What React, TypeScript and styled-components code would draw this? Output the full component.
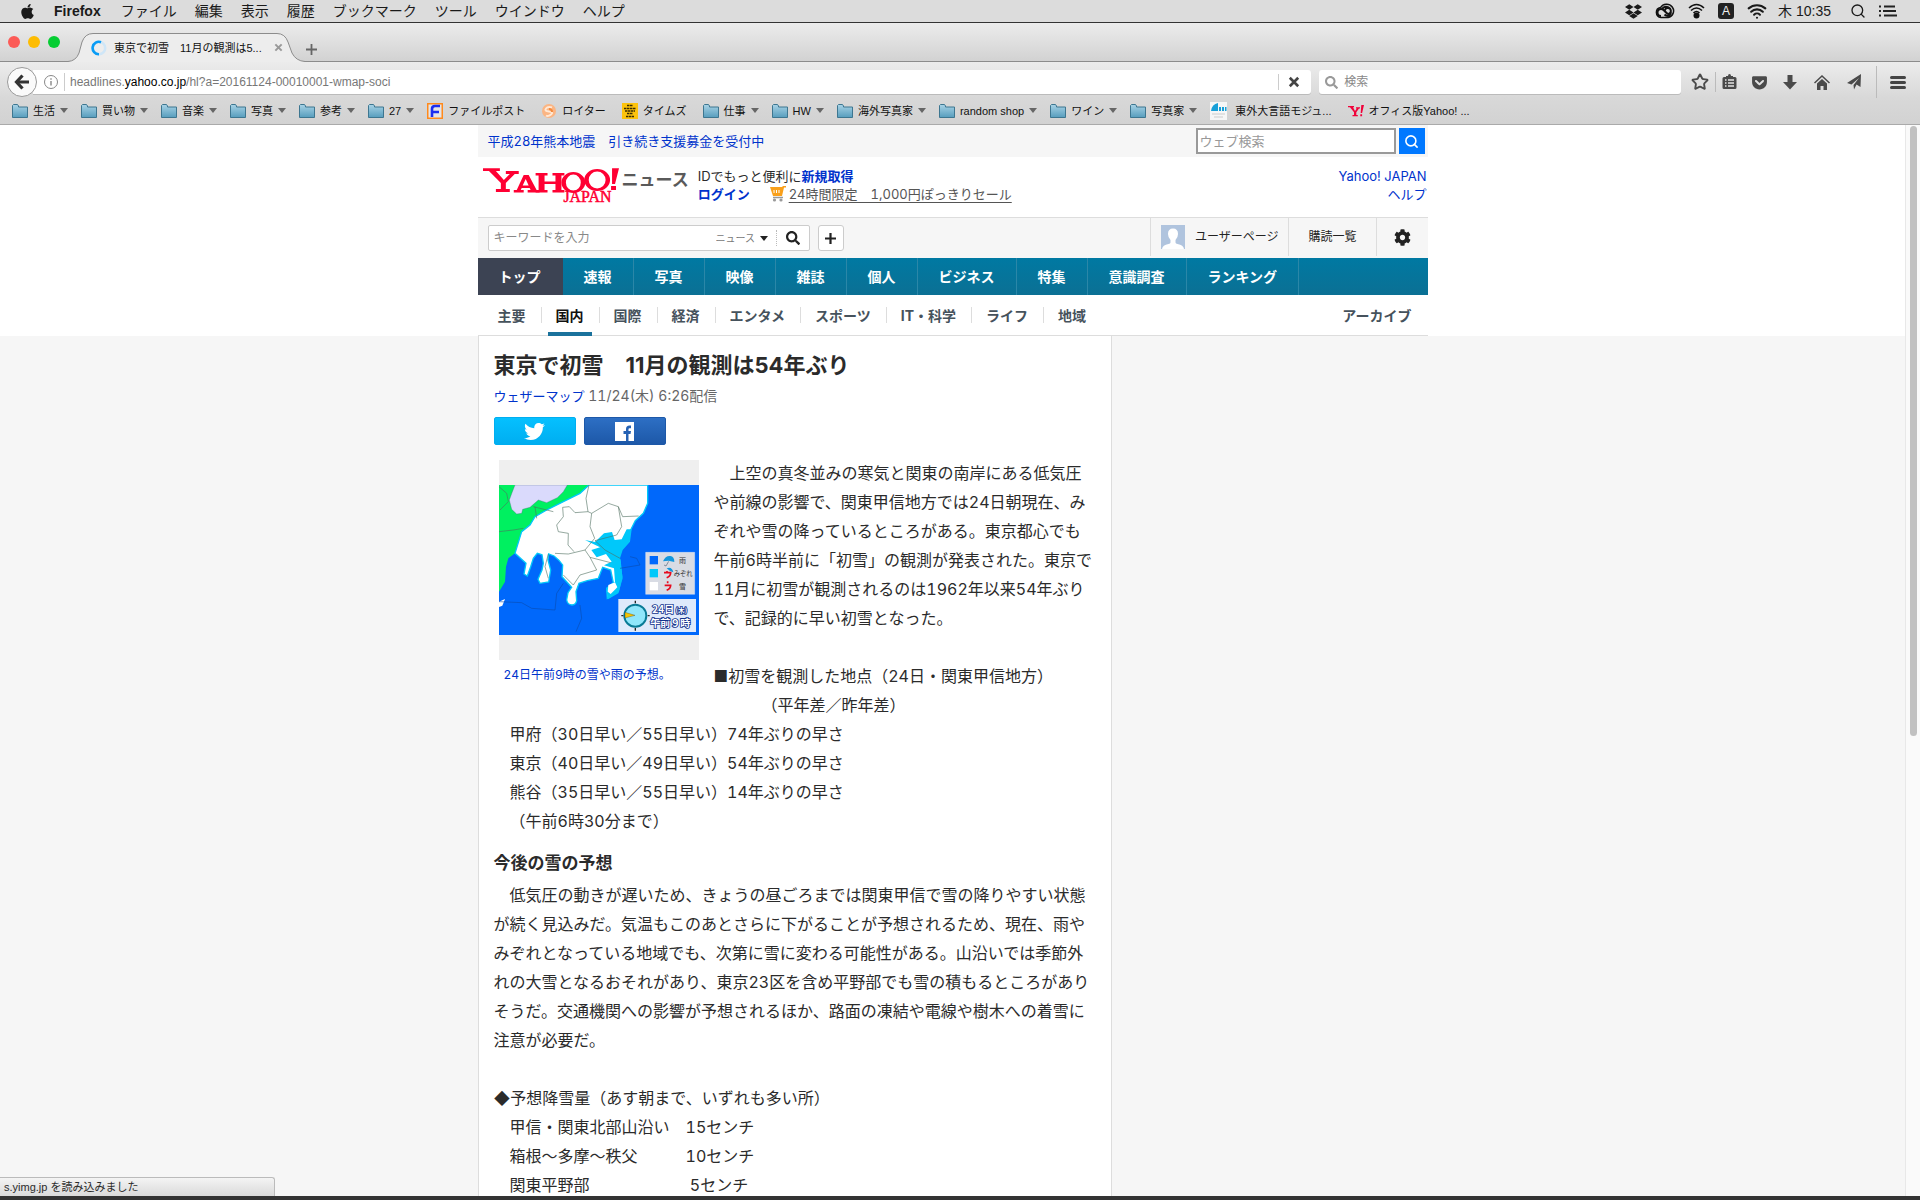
import React from "react";
import styled, { createGlobalStyle } from "styled-components";
import { FaApple, FaDropbox, FaSearch, FaTwitter, FaGetPocket, FaCog } from "react-icons/fa";
import { Wifi, Star, Search } from "lucide-react";

const ui = `"Liberation Sans", "Noto Sans CJK JP", sans-serif`;
const web = `Inter, "Noto Sans CJK JP", sans-serif`;

const Global = createGlobalStyle`
  *, *::before, *::after { box-sizing: border-box; }
  body { margin: 0; font-family: ${web}; color: #2b2b2b; background: #f6f6f6; }
  a { color: #0033cc; text-decoration: none; }
  button, input, select { font: inherit; margin: 0; }
  button { cursor: pointer; }
  ul { list-style: none; margin: 0; padding: 0; }
  h1, h2, p, figure { margin: 0; }
  svg { display: block; flex: none; }
`;

const Screen = styled.div`
  position: relative;
  height: 100vh;
  display: flex;
  flex-direction: column;
  overflow: hidden;
  border-bottom: 4px solid #333;
`;

/* ---------- system menu bar ---------- */
const MenuBar = styled.header`
  flex: none;
  height: 23px;
  display: flex;
  align-items: center;
  justify-content: space-between;
  padding: 0 23px 0 19px;
  background: #dcdcdc;
  border-bottom: 1px solid #333;
  font: 14px/22px ${ui};
  color: #1a1a1a;
`;
const MenuGroup = styled.nav`
  display: flex;
  align-items: center;
  gap: 18px;
`;
const MenuItem = styled.button<{ $strong?: boolean }>`
  border: 0;
  padding: 0;
  background: none;
  color: inherit;
  line-height: 22px;
  white-space: nowrap;
  font-weight: ${(p) => (p.$strong ? 700 : 400)};
  margin-right: ${(p) => (p.$strong ? 2 : 0)}px;
`;
const StatusGroup = styled.div`
  display: flex;
  align-items: center;
  gap: 13px;
`;
const InputMode = styled.span`
  width: 16px;
  height: 16px;
  border-radius: 3px;
  background: #222;
  color: #eee;
  font-size: 12px;
  line-height: 16px;
  text-align: center;
`;
const Clock = styled.time`
  margin-left: -2px;
  margin-right: 6px;
`;

/* ---------- browser chrome ---------- */
const TabStrip = styled.div`
  flex: none;
  height: 39px;
  display: flex;
  align-items: flex-end;
  padding-left: 8px;
  background: linear-gradient(#ececec, #d2d2d2);
  border-bottom: 1px solid #8c8c8c;
  font: 11px/16px ${ui};
`;
const Lights = styled.div`
  display: flex;
  gap: 8px;
  margin-bottom: 13px;
`;
const Light = styled.button<{ $color: string }>`
  width: 12px;
  height: 12px;
  padding: 0;
  border: 0;
  border-radius: 50%;
  background: ${(p) => p.$color};
`;
const Tab = styled.div`
  position: relative;
  width: 240px;
  height: 29px;
  margin-left: 6px;
  margin-bottom: -1px;
`;
const TabShape = styled.svg`
  position: absolute;
  inset: 0;
`;
const TabContent = styled.div`
  position: relative;
  display: flex;
  align-items: center;
  height: 29px;
  padding: 0 23px 0 25px;
  color: #111;
`;
const TabTitle = styled.span`
  flex: 1;
  margin-left: 7px;
  overflow: hidden;
  white-space: nowrap;
`;
const IconButton = styled.button<{ $w?: number }>`
  flex: none;
  display: flex;
  align-items: center;
  justify-content: center;
  width: ${(p) => p.$w ?? 16}px;
  height: 24px;
  padding: 0;
  border: 0;
  background: none;
  color: #4a4a4a;
`;
const NavBar = styled.div`
  flex: none;
  height: 36px;
  display: flex;
  align-items: center;
  padding: 4px 9px 0 7px;
  background: linear-gradient(#ececec, #d8d8d8);
  font: 12px/24px ${ui};
`;
const BackButton = styled.button`
  z-index: 1;
  display: flex;
  align-items: center;
  justify-content: center;
  width: 30px;
  height: 30px;
  padding: 0;
  border: 1px solid #9a9a9a;
  border-radius: 50%;
  background: #fafafa;
  color: #333;
`;
const UrlBox = styled.div`
  flex: 1;
  display: flex;
  align-items: center;
  height: 24px;
  margin-left: -4px;
  padding-left: 11px;
  border-radius: 0 3px 3px 0;
  background: #fff;
  box-shadow: 0 1px 0 #bbb;
`;
const UrlLabel = styled.label`
  flex: 1;
  display: flex;
  margin-left: 6px;
  padding-left: 5px;
  border-left: 1px solid #ccc;
  line-height: 18px;
  font-size: 12px;
  color: #777;
  white-space: nowrap;
  b { font-weight: 400; color: #000; }
`;
const BareInput = styled.input`
  flex: 1;
  min-width: 0;
  border: 0;
  padding: 0;
  outline: 0;
  background: none;
  color: #333;
  &::placeholder { color: #888; opacity: 1; }
`;
const StopWrap = styled.div`
  padding: 0 10px 0 8px;
  height: 16px;
  display: flex;
  align-items: center;
  border-left: 1px solid #ccc;
`;
const SearchBox = styled.label`
  width: 19%;
  height: 24px;
  display: flex;
  align-items: center;
  gap: 6px;
  margin-left: 8px;
  padding-left: 6px;
  border-radius: 3px;
  background: #fff;
  box-shadow: 0 1px 0 #bbb;
  color: #999;
`;
const Tools = styled.div`
  display: flex;
  align-items: center;
  padding-left: 10px;
`;
const ToolRule = styled.span<{ $wide?: boolean }>`
  width: 1px;
  height: ${(p) => (p.$wide ? 32 : 20)}px;
  margin: ${(p) => (p.$wide ? "0 8px 0 6px" : "0 -2px 0 6px")};
  background: #bbb;
`;
const Bookmarks = styled.nav`
  flex: none;
  height: 27px;
  display: flex;
  align-items: center;
  gap: 13px;
  padding: 0 12px 1px;
  background: linear-gradient(#d8d8d8, #d2d2d2);
  border-bottom: 1px solid #aaa;
  font: 11px/20px ${ui};
`;
const Bookmark = styled.button<{ $link?: boolean }>`
  display: flex;
  align-items: center;
  gap: 5px;
  padding: 0;
  margin-right: ${(p) => (p.$link ? 3 : 0)}px;
  border: 0;
  background: none;
  color: #111;
  white-space: nowrap;
`;
const Caret = styled.i<{ $color?: string }>`
  border: 4px solid transparent;
  border-bottom: 0;
  border-top: 5px solid ${(p) => p.$color ?? "#666"};
`;

/* ---------- page ---------- */
const Viewport = styled.div`
  flex: 1;
  min-height: 0;
  display: flex;
  background: #f6f6f6;
`;
const Page = styled.div`
  flex: 1;
  min-width: 0;
  overflow: hidden;
`;
const ScrollTrack = styled.div`
  flex: none;
  width: 15px;
  padding: 1px 3px 0 4px;
  background: #fafafa;
  border-left: 1px solid #e8e8e8;
`;
const ScrollThumb = styled.div`
  height: 57%;
  border-radius: 4px;
  background: #c1c1c1;
`;
const Masthead = styled.header`
  background: #fff;
`;
const Column = styled.div`
  width: 950px;
  max-width: 100%;
  margin: 0 auto;
`;
const TopStrip = styled.div`
  display: flex;
  align-items: center;
  justify-content: space-between;
  height: 32px;
  padding: 0 3px 0 10px;
  background: #f6f6f6;
  font-size: 13px;
  line-height: 18px;
  font-variant-numeric: tabular-nums;
`;
const WebSearch = styled.form`
  display: flex;
  gap: 3px;
  input {
    width: 200px;
    height: 26px;
    padding: 0 2px;
    border: 2px solid #999;
    border-radius: 0;
    background: #fff;
    outline: 0;
  }
  input::placeholder { color: #999; opacity: 1; }
  button {
    display: flex;
    align-items: center;
    justify-content: center;
    width: 26px;
    height: 26px;
    padding: 0;
    border: 0;
    background: #0078ff;
    color: #fff;
  }
`;
const Brand = styled.div`
  display: flex;
  height: 60px;
  padding: 10px 1px 0 5px;
  font-size: 13px;
  line-height: 18px;
  font-variant-numeric: tabular-nums;
`;
const NewsWord = styled.span`
  margin: 0 9px 0 3px;
  padding-top: 4px;
  font-size: 17px;
  line-height: 18px;
  font-weight: 700;
  color: #5a5a5a;
`;
const LoginLines = styled.div`
  a { font-weight: 700; }
`;
const PromoRow = styled.div`
  display: flex;
  align-items: center;
  gap: 20px;
  span { display: flex; gap: 3px; align-items: center; }
  span a { font-weight: 400; color: #555; text-decoration: underline; text-underline-offset: 3px; }
`;
const HelpLinks = styled.div`
  display: flex;
  flex-direction: column;
  align-items: flex-end;
  margin-left: auto;
`;
const ToolRow = styled.div`
  display: flex;
  align-items: center;
  height: 41px;
  padding-left: 10px;
  background: #f6f6f6;
  border-top: 1px solid #ddd;
  font-size: 12px;
  line-height: 18px;
`;
const Keyword = styled.form`
  display: flex;
  align-items: center;
  width: 322px;
  height: 26px;
  padding: 0 0 0 5px;
  border: 1px solid #ccc;
  border-radius: 2px;
  background: #fff;
`;
const Scope = styled.span`
  display: flex;
  align-items: center;
  gap: 4px;
  margin-right: 2px;
  select {
    appearance: none;
    padding: 0;
    border: 0;
    background: none;
    color: #777;
    font-size: 10px;
  }
`;
const ScopeRule = styled.i`
  height: 16px;
  margin-left: 6px;
  border-left: 1px dotted #bbb;
`;
const PlusButton = styled.button`
  display: flex;
  align-items: center;
  justify-content: center;
  width: 26px;
  height: 26px;
  margin-left: 8px;
  padding: 0;
  border: 1px solid #ccc;
  border-radius: 3px;
  background: #fff;
`;
const UserCells = styled.div`
  display: flex;
  margin-left: auto;
  height: 38px;
  align-self: flex-start;
`;
const UserCell = styled.a<{ $pad: number }>`
  display: flex;
  align-items: center;
  gap: 10px;
  padding: 0 ${(p) => p.$pad}px;
  border-left: 1px solid #ddd;
  color: #222;
`;
const MainNav = styled.ul`
  display: flex;
  height: 37px;
  background: linear-gradient(#0079a2, #0b7094);
`;
const MainItem = styled.li<{ $on?: boolean }>`
  border-right: 1px solid ${(p) => (p.$on ? "#3c4353" : "#2b87a8")};
  background: ${(p) => (p.$on ? "#3c4353" : "none")};
  a {
    display: block;
    padding: 0 21px;
    font-size: 14px;
    font-weight: 700;
    line-height: 38px;
    color: #fff;
  }
`;
const SubNav = styled.ul`
  display: flex;
  align-items: center;
  height: 41px;
  padding-left: 6px;
  border-bottom: 1px solid #ddd;
  font-size: 14px;
  font-weight: 700;
  line-height: 42px;
`;
const SubItem = styled.li<{ $on?: boolean }>`
  display: flex;
  align-items: center;
  height: 41px;
  padding: 0 6px;
  &::after {
    content: "";
    width: 1px;
    height: 16px;
    margin-left: 7px;
    margin-right: -6px;
    background: #ddd;
  }
  &:nth-last-child(-n + 2)::after { background: none; }
  &:last-child { margin-left: auto; }
  a {
    height: 41px;
    padding: 0 8px;
    border-bottom: 4px solid ${(p) => (p.$on ? "#1a729c" : "transparent")};
    color: ${(p) => (p.$on ? "#111" : "#46525c")};
  }
`;
const Article = styled.article`
  width: 634px;
  max-width: 100%;
  padding: 14px 16px 0 15px;
  border: 1px solid #ddd;
  border-width: 0 1px;
  background: #fff;
`;
const Title = styled.h1`
  font-size: 22px;
  line-height: 30px;
`;
const Meta = styled.p`
  margin-top: 6px;
  font-size: 14px;
  line-height: 20px;
  font-variant-numeric: tabular-nums;
  color: #666;
  a { font-size: 13px; }
`;
const Share = styled.div`
  display: flex;
  gap: 8px;
  margin: 11px 0 14px;
`;
const ShareButton = styled.button<{ $from: string; $to: string }>`
  display: flex;
  align-items: center;
  justify-content: center;
  width: 82px;
  height: 28px;
  padding: 0;
  border: 1px solid ${(p) => p.$to};
  border-radius: 2px;
  background: linear-gradient(${(p) => p.$from}, ${(p) => p.$to});
  color: #fff;
`;
const Body = styled.div`
  font-size: 16px;
  line-height: 29px;
  font-variant-numeric: tabular-nums;
  text-spacing-trim: space-all;
  p { white-space: pre-wrap; line-break: strict; }
`;
const Photo = styled.figure`
  float: left;
  width: 200px;
  margin: 1px 15px 16px 5px;
  figcaption {
    padding: 6px 0 0 5px;
    font-size: 12px;
    line-height: 18px;
    color: #0033cc;
  }
`;
const Frame = styled.div`
  padding: 25px 0;
  background: #efefef;
`;
const SubHead = styled.h2`
  margin: 13px 0 4px;
  font-size: 17px;
  line-height: 28px;
`;
const StatusTip = styled.div`
  position: absolute;
  left: 0;
  bottom: 0;
  width: 275px;
  height: 19px;
  padding: 0 4px;
  border: 1px solid #bbb;
  border-width: 1px 1px 0 0;
  border-radius: 0 3px 0 0;
  background: linear-gradient(#f4f4f4, #dadada);
  font: 11px/18px ${ui};
`;

/* ---------- drawings ---------- */
const Folder = () => (
  <svg width="16" height="14" viewBox="0 0 16 14">
    <defs>
      <linearGradient id="fold" x1="0" y1="0" x2="0" y2="1">
        <stop offset="0" stopColor="#a9d3e6" />
        <stop offset="1" stopColor="#569dbd" />
      </linearGradient>
    </defs>
    <path d="M.5 1.500 1.500.5h4l1 1.500v1h9v10.500h-15z" fill="url(#fold)" stroke="#3d7690" />
  </svg>
);
const FilePost = () => (
  <svg width="16" height="16" viewBox="0 0 16 16">
    <path d="M.75.75h14.500v14.500H.75z" fill="#e4e4e8" stroke="#ff8a1c" strokeWidth="1.500" />
    <path d="M5 14V6q0-3 3-3h5M5 9h7" fill="none" stroke="#1c2ef0" strokeWidth="2.600" />
  </svg>
);
const Reuters = () => (
  <svg width="16" height="16" viewBox="0 0 16 16">
    <circle cx="8" cy="8" r="7" fill="#fbb583" />
    <path d="M11 4.500Q7 3 5 5.500t3 3 2 3-5 1" fill="none" stroke="#ffe9d6" strokeWidth="2" />
    <path d="M8 6q3 0 3 3" fill="none" stroke="#f58a3c" strokeWidth="2" />
  </svg>
);
const Times = () => (
  <svg width="16" height="16" viewBox="0 0 16 16">
    <path d="M0 0h16v16H0z" fill="#fdc30b" />
    <path d="M5 2.500h6M2 5.500h12M3 8h10M5 10.500h6M4 13.500h8" stroke="#3a2c00" strokeWidth="1.700" strokeDasharray="2.500 .5" />
  </svg>
);
const Tufs = () => (
  <svg width="20" height="18" viewBox="0 0 20 18">
    <path d="M0 0h17v18H0z" fill="#f6f6f6" />
    <path d="M1 9q1-7 7-8v8zM9 5h2v4H9zM12 5h2v4h-2zM15 5h1.500v4H15z" fill="#18a0d8" />
    <path d="M2 12h13M4 15h9" stroke="#ccc" />
  </svg>
);
const YIcon = () => (
  <svg width="16" height="16" viewBox="0 0 16 16" fill="#f0033a">
    <path d="M0 3h6v1.200H5L7 8l1.800-2.500H8V4.300h4v1.200h-1L8.300 9.300V12h1.500v1.300H4.500V12H6V9.300L2 4.200H0zM13.300 2H16l-1.900 8h-1.400zM12.300 11.300h1.800v2h-1.800z" />
  </svg>
);
const CreativeCloud = () => (
  <svg width="20" height="16" viewBox="0 0 20 16">
    <path d="M6 14.500a5 5 0 0 1-.5-9.900 7 6.700 0 1 1 7.500 9.900z" fill="none" stroke="#111" strokeWidth="1.500" />
    <path d="M6 13a3.500 3.500 0 0 1 0-7q1.500 0 2.500 1l4.500 4.300M7.500 5.500A4.800 4.800 0 1 1 13 13q-2 0-3.500-1.500M10 9a3 3 0 1 1 3 2" fill="none" stroke="#111" strokeWidth="2" />
  </svg>
);
const AirPort = () => (
  <svg width="17" height="16" viewBox="0 0 17 16" fill="none" stroke="#111" strokeWidth="1.600">
    <path d="M1 5q7.500-7 15 0M3 7.500q5.500-5 11 0M5.500 10q3-3 6 0" />
    <circle cx="8.500" cy="12.500" r="3" fill="#111" stroke="none" />
  </svg>
);
const ListIcon = () => (
  <svg width="18" height="12" viewBox="0 0 18 12" stroke="#222" strokeWidth="1.800">
    <path d="M0 1.500h2M0 6h2M0 10.500h2M5 1.500h11M4 6h13M5 10.500h13" />
  </svg>
);
const Spinner = () => (
  <svg width="16" height="16" viewBox="0 0 16 16" fill="none" strokeWidth="2.600">
    <circle cx="8" cy="8" r="6.200" stroke="#cfe6f7" />
    <path d="M10 2.200A6.200 6.200 0 1 0 8 14.200" stroke="#0a9cf5" />
  </svg>
);
const Cross = ({ size, color }: { size: number; color: string }) => (
  <svg width={size} height={size} viewBox="0 0 10 10">
    <path d="M1.500 1.500l7 7M8.500 1.500l-7 7" stroke={color} strokeWidth="2.200" />
  </svg>
);
const Plus = ({ color, w }: { color: string; w: number }) => (
  <svg width="11" height="11" viewBox="0 0 11 11">
    <path d="M5.500 0v11M0 5.500h11" stroke={color} strokeWidth={w} />
  </svg>
);
const Back = () => (
  <svg width="16" height="16" viewBox="0 0 16 16" fill="none" stroke="#333">
    <path d="M2.500 8H15" strokeWidth="3" />
    <path d="M8.500 1.500 2.500 8l6 6.500" strokeWidth="3.200" />
  </svg>
);
const InfoIcon = () => (
  <svg width="14" height="14" viewBox="0 0 14 14" fill="none" stroke="#888">
    <circle cx="7" cy="7" r="6.500" />
    <path d="M7 6v4.500M7 3.200v1.500" strokeWidth="1.400" />
  </svg>
);
const Reading = () => (
  <svg width="15" height="16" viewBox="0 0 15 16">
    <path d="M4 2h2q0-2 1.500-2T9 2h2v1h2q1.500 0 1.500 1.500v9Q14.500 15 13 15H2Q.5 15 .5 13.500v-9Q.5 3 2 3h2z" fill="#4a4a4a" />
    <path d="M3 6h1.500M6 6h6M3 9h1.500M6 9h6M3 12h1.500M6 12h6" stroke="#e4e4e4" strokeWidth="1.500" />
  </svg>
);
const Down = () => (
  <svg width="14" height="15" viewBox="0 0 14 15">
    <path d="M4.500 0h5v7H14l-7 7.500L0 7h4.500z" fill="#4a4a4a" />
  </svg>
);
const HomeIcon = () => (
  <svg width="16" height="15" viewBox="0 0 16 15">
    <path d="M.5 8 8 1l7.500 7" fill="none" stroke="#4a4a4a" strokeWidth="1.500" />
    <path d="M3 8.500 8 4l5 4.500V15H9.500v-4h-3v4H3z" fill="#4a4a4a" />
  </svg>
);
const Plane = () => (
  <svg width="15" height="16" viewBox="0 0 15 16">
    <path d="M14 0 13.500 13l-4-2.500L7 15.500 6.500 11 12 4 4.500 10.500 0 9z" fill="#4a4a4a" />
  </svg>
);
const Burger = () => (
  <svg width="16" height="13" viewBox="0 0 16 13">
    <path d="M1.500 1.500h13M1.500 6.500h13M1.500 11.500h13" stroke="#444" strokeWidth="3" strokeLinecap="round" />
  </svg>
);
const Logo = () => (
  <svg width="136" height="38" viewBox="0 0 137 38" fill="#ff0033" fontFamily="'Liberation Serif', serif" fontWeight="700" role="img" aria-label="Yahoo! JAPAN">
    <path d="M0 1h17v3h-4l8 9 6-6h-4V4h13v3h-4l-9 9v6h4v3H13v-3h5v-6L6 4H0z" />
    <path d="M41 8h5l8 15h3v2.500H45V23h3l-1-2h-8l-1 2h3v2.500H31V23h3zM43 12l-3 6.500h6z" fillRule="evenodd" />
    <path d="M53 6h12v2.500h-3v6h11v-6h-3V6h12v2.500h-3v14.500h3v2.500H70V23h3v-6H62v6h3v2.500H53V23h3V8.500h-3z" />
    <path d="M91 5a12 10.500 0 1 1 0 21 12 10.500 0 1 1 0-21zm0 2.500a7.500 8 0 1 0 0 16 7.500 8 0 1 0 0-16z" fillRule="evenodd" />
    <path d="M115 2a13 11 0 1 1 0 22 13 11 0 1 1 0-22zm0 2.500a8.500 8.500 0 1 0 0 17 8.500 8.500 0 1 0 0-17z" fillRule="evenodd" />
    <path d="M130 1h7l-4 16h-3zM129 19h5v4h-5z" />
    <text x="81" y="35" fontSize="16" fontWeight="400" stroke="#ff0033" strokeWidth=".5">JAPAN</text>
  </svg>
);
const Cart = () => (
  <svg width="16" height="16" viewBox="0 0 16 16">
    <path d="M0 1h12l1-1h3v1.500h-2L12 10H3z" fill="#f9a01b" />
    <path d="M4 4v3M6.500 4v3M9 4v3" stroke="#fff" />
    <path d="M3 11.500h10" stroke="#999" strokeWidth="1.500" />
    <circle cx="4.500" cy="14" r="1.600" fill="#999" />
    <circle cx="11" cy="14" r="1.600" fill="#999" />
  </svg>
);
const Avatar = () => (
  <svg width="24" height="24" viewBox="0 0 24 24">
    <path d="M0 0h24v24H0z" fill="#b0c4de" />
    <path d="M12 3.500q5 0 5 5.500 0 3.500-2.500 6v2.500q0 1 2 1.500 6 1 6.500 5H1q.5-4 6.500-5 2-.5 2-1.500V15Q7 12.500 7 9q0-5.500 5-5.500z" fill="#fff" />
  </svg>
);
const Facebook = () => (
  <svg width="19" height="19" viewBox="0 0 19 19">
    <path d="M0 0h19v19H0z" fill="#fff" />
    <path d="M11 19v-7H8.500V9H11V7q0-3.500 3.500-3.500H16v2.800h-1.500q-1 0-1 1V9H16l-.5 3h-2v7z" fill="#2562b4" />
  </svg>
);
const WeatherMap = () => (
  <svg width="200" height="150" viewBox="57 105 600 450" fontFamily='"Noto Sans CJK JP", sans-serif' role="img" aria-label="雪と雨の予想図">
    <path d="M57 105h600v450H57z" fill="#0068fb" />
    <path d="M57 105H330L300 130 250 155 200 180 165 200 150 225 125 245 105 310 85 325 78 350 75 395 57 425z" fill="#00f060" />
    <path d="M105 105H262L250 125 232 143 200 158 175 150 150 172 128 178 125 190 110 192 95 178 88 150 96 128z" fill="#dadafc" stroke="#4a6a7a" />
    <path d="M327 105H503V160L490 190 466 212 452 240 430 268 405 300 420 330 425 380 415 425 382 445 380 415 400 398 392 360 368 352 355 385 322 392 297 400 288 425 290 452Q288 464 276 465 262 464 260 450L264 428 275 412 246 380 248 345Q238 330 222 318L206 312 204 330 212 360 206 396 180 400 174 388 186 360 190 340 186 314 172 310 160 325 152 350 142 378 132 372 138 340 105 310 125 245 150 225 165 200 200 180 250 155 300 130z" fill="#fff" stroke="#00c8fa" strokeWidth="4" />
    <path d="M315 270 345 276 372 250 396 246 404 270 425 268 440 238 455 238 450 275 428 300 420 325 428 385 415 430 384 448 378 415 405 395 402 355 372 346 395 335 378 312 350 322 334 300 360 292z" fill="#00c8fa" />
    <path d="M385 405 405 397 412 412 392 432 383 425z" fill="#fff" />
    <path d="M57 455l18-8-8 20-10 4z" fill="#fff" />
    <g fill="none" stroke="#4f6f5f" strokeWidth="1.800">
      <path d="M327 105 318 145 324 185 335 190 330 230 344 265 315 300 265 312 225 310M324 185 285 188 268 170 248 172 250 200 230 225 235 245 265 250 264 285 282 305" />
      <path d="M335 190 385 160 415 170 428 200 476 198M415 170 425 230 410 255 345 272M345 272 375 300 420 325M315 300 330 322 392 338M330 322 350 360 300 375 280 405 250 375M205 312 195 350 205 385M57 245 100 240 130 235M165 170 170 205M57 110 80 130 85 155 60 180M160 170 220 185" />
      <path d="M57 455 125 458 155 475 225 480 230 430 250 400M300 465 305 505 288 545M480 345 420 355M480 345 470 325 450 320" stroke="#0a4cae" />
    </g>
    <path d="M497 307h147v126H497z" fill="#d9dce4" stroke="#fff" />
    <path d="M509 318h25v25h-25z" fill="#0068fb" />
    <path d="M509 357h25v25h-25z" fill="#00c8fa" />
    <path d="M509 396h25v25h-25z" fill="#fff" />
    <path d="M549 334q8-18 22-16 12 2 12 18l-17-4z" fill="#1397dc" />
    <path d="M566 334l-8 14-6-3" fill="none" stroke="#567" strokeWidth="2" />
    <path d="M560 355q16-6 20 12l-10-4z" fill="#1397dc" />
    <path d="M552 368h20q0 10-12 15M561 363v5M554 406h18q0 10-12 15M563 394v6" fill="none" stroke="#e60a1e" strokeWidth="5" />
    <g fontSize="21" fill="#333">
      <text x="597" y="339">雨</text>
      <text x="581" y="377" fontSize="19">みぞれ</text>
      <text x="597" y="416">雪</text>
    </g>
    <path d="M415 447h233v99H415z" fill="#dfeafb" />
    <circle cx="466" cy="497" r="33" fill="#8fe6fb" stroke="#0a7b96" strokeWidth="6" />
    <path d="M435 487l30 9-30 8z" fill="#f6c400" stroke="#333" />
    <path d="M466 452v8M466 534v8M424 497h6M503 497h6" stroke="#222" strokeWidth="4" />
    <g fill="#fff" stroke="#12328c" strokeWidth="5" paintOrder="stroke" fontWeight="700">
      <text x="517" y="490" fontSize="30">24日<tspan fontSize="20" dx="4">(木)</tspan></text>
      <text x="511" y="532" fontSize="30">午前９時</text>
    </g>
  </svg>
);

/* ---------- content ---------- */
const menus = ["ファイル", "編集", "表示", "履歴", "ブックマーク", "ツール", "ウインドウ", "ヘルプ"];
type Mark = { label: string; icon?: React.ReactNode };
const marks: Mark[] = [
  { label: "生活" }, { label: "買い物" }, { label: "音楽" }, { label: "写真" }, { label: "参考" }, { label: "27" },
  { label: "ファイルポスト", icon: <FilePost /> },
  { label: "ロイター", icon: <Reuters /> },
  { label: "タイムズ", icon: <Times /> },
  { label: "仕事" }, { label: "HW" }, { label: "海外写真家" }, { label: "random shop" }, { label: "ワイン" }, { label: "写真家" },
  { label: "東外大言語モジュ...", icon: <Tufs /> },
  { label: "オフィス版Yahoo! ...", icon: <YIcon /> },
];
const mainNav = ["トップ", "速報", "写真", "映像", "雑誌", "個人", "ビジネス", "特集", "意識調査", "ランキング"];
const subNav = ["主要", "国内", "国際", "経済", "エンタメ", "スポーツ", "IT・科学", "ライフ", "地域", "アーカイブ"];

const lead = `　上空の真冬並みの寒気と関東の南岸にある低気圧や前線の影響で、関東甲信地方では24日朝現在、みぞれや雪の降っているところがある。東京都心でも午前6時半前に「初雪」の観測が発表された。東京で11月に初雪が観測されるのは1962年以来54年ぶりで、記録的に早い初雪となった。

■初雪を観測した地点（24日・関東甲信地方）
　　　（平年差／昨年差）
　甲府（30日早い／55日早い）74年ぶりの早さ
　東京（40日早い／49日早い）54年ぶりの早さ
　熊谷（35日早い／55日早い）14年ぶりの早さ
　（午前6時30分まで）`;

const forecast = `　低気圧の動きが遅いため、きょうの昼ごろまでは関東甲信で雪の降りやすい状態が続く見込みだ。気温もこのあとさらに下がることが予想されるため、現在、雨やみぞれとなっている地域でも、次第に雪に変わる可能性がある。山沿いでは季節外れの大雪となるおそれがあり、東京23区を含め平野部でも雪の積もるところがありそうだ。交通機関への影響が予想されるほか、路面の凍結や電線や樹木への着雪に注意が必要だ。

◆予想降雪量（あす朝まで、いずれも多い所）
　甲信・関東北部山沿い　15センチ
　箱根～多摩～秩父　　　10センチ
　関東平野部　　　　　　 5センチ`;

export default function App() {
  return (
    <Screen>
      <Global />
      <MenuBar>
        <MenuGroup aria-label="メニュー">
          <FaApple size={17} />
          <MenuItem $strong>Firefox</MenuItem>
          {menus.map((m) => (
            <MenuItem key={m}>{m}</MenuItem>
          ))}
        </MenuGroup>
        <StatusGroup>
          <FaDropbox size={17} />
          <CreativeCloud />
          <AirPort />
          <InputMode>A</InputMode>
          <Wifi size={20} strokeWidth={2.500} />
          <Clock>木 10:35</Clock>
          <Search size={16} />
          <ListIcon />
        </StatusGroup>
      </MenuBar>

      <TabStrip>
        <Lights>
          <Light $color="#fc5b57" aria-label="閉じる" />
          <Light $color="#fdbc02" aria-label="しまう" />
          <Light $color="#06cd33" aria-label="拡大" />
        </Lights>
        <Tab>
          <TabShape width="240" height="29" viewBox="0 0 240 29">
            <path d="M2 28.500Q10 28 13 20L16 9Q19 .5 27 .5H211Q219 .5 222 9L226 20Q230 28 239 28.500V29H2z" fill="#ededed" />
            <path d="M2 28.500Q10 28 13 20L16 9Q19 .5 27 .5H211Q219 .5 222 9L226 20Q230 28 239 28.500" fill="none" stroke="#8c8c8c" />
          </TabShape>
          <TabContent>
            <IconButton as="span">
              <Spinner />
            </IconButton>
            <TabTitle>東京で初雪　11月の観測は5...</TabTitle>
            <IconButton aria-label="タブを閉じる" $w={10}>
              <Cross size={9} color="#999" />
            </IconButton>
          </TabContent>
        </Tab>
        <IconButton aria-label="新しいタブ" $w={11}>
          <Plus color="#666" w={1.8} />
        </IconButton>
      </TabStrip>

      <NavBar>
        <BackButton aria-label="戻る">
          <Back />
        </BackButton>
        <UrlBox>
          <InfoIcon />
          <UrlLabel>
            headlines.<b>yahoo.co.jp</b>/hl?a=20161124-00010001-wmap-soci
            <BareInput aria-label="アドレス" />
          </UrlLabel>
          <StopWrap>
            <IconButton aria-label="中止" $w={14}>
              <Cross size={12} color="#444" />
            </IconButton>
          </StopWrap>
        </UrlBox>
        <SearchBox>
          <FaSearch size={13} />
          <BareInput placeholder="検索" aria-label="検索" />
        </SearchBox>
        <Tools>
          <IconButton aria-label="ブックマークに追加" $w={18}>
            <Star size={18} strokeWidth={2.5} />
          </IconButton>
          <ToolRule />
          <IconButton aria-label="ブックマーク" $w={30}><Reading /></IconButton>
          <IconButton aria-label="Pocket" $w={30}><FaGetPocket size={17} /></IconButton>
          <IconButton aria-label="ダウンロード" $w={32}><Down /></IconButton>
          <IconButton aria-label="ホーム" $w={32}><HomeIcon /></IconButton>
          <IconButton aria-label="送信" $w={32}><Plane /></IconButton>
          <ToolRule $wide />
          <IconButton aria-label="メニュー" $w={26}><Burger /></IconButton>
        </Tools>
      </NavBar>

      <Bookmarks aria-label="ブックマーク">
        {marks.map((m) => (
          <Bookmark key={m.label} $link={!!m.icon}>
            {m.icon ?? <Folder />}
            <span>{m.label}</span>
            {!m.icon && <Caret />}
          </Bookmark>
        ))}
      </Bookmarks>

      <Viewport>
        <Page>
          <Masthead>
            <Column>
              <TopStrip>
                <a href="#donate">平成28年熊本地震　引き続き支援募金を受付中</a>
                <WebSearch>
                  <input placeholder="ウェブ検索" aria-label="ウェブ検索" />
                  <button type="button" aria-label="ウェブ検索を実行">
                    <Search size={15} strokeWidth={2.5} />
                  </button>
                </WebSearch>
              </TopStrip>
              <Brand>
                <Logo />
                <NewsWord>ニュース</NewsWord>
                <LoginLines>
                  <div>
                    IDでもっと便利に<a href="#signup">新規取得</a>
                  </div>
                  <PromoRow>
                    <a href="#login">ログイン</a>
                    <span>
                      <Cart />
                      <a href="#sale">24時間限定　1,000円ぽっきりセール</a>
                    </span>
                  </PromoRow>
                </LoginLines>
                <HelpLinks>
                  <a href="#yahoo">Yahoo! JAPAN</a>
                  <a href="#help">ヘルプ</a>
                </HelpLinks>
              </Brand>
              <ToolRow>
                <Keyword>
                  <BareInput placeholder="キーワードを入力" aria-label="キーワード" />
                  <Scope>
                    <select aria-label="検索対象">
                      <option>ニュース</option>
                    </select>
                    <Caret $color="#222" />
                  </Scope>
                  <ScopeRule />
                  <IconButton type="button" aria-label="検索" $w={32}>
                    <FaSearch size={14} color="#222" />
                  </IconButton>
                </Keyword>
                <PlusButton aria-label="追加">
                  <Plus color="#222" w={2.2} />
                </PlusButton>
                <UserCells>
                  <UserCell href="#user" $pad={10}>
                    <Avatar />
                    ユーザーページ
                  </UserCell>
                  <UserCell href="#list" $pad={19}>購読一覧</UserCell>
                  <UserCell href="#settings" $pad={17} aria-label="設定">
                    <FaCog size={17} />
                  </UserCell>
                </UserCells>
              </ToolRow>
              <MainNav>
                {mainNav.map((n, i) => (
                  <MainItem key={n} $on={i === 0}>
                    <a href="#main">{n}</a>
                  </MainItem>
                ))}
              </MainNav>
              <SubNav>
                {subNav.map((n, i) => (
                  <SubItem key={n} $on={i === 1}>
                    <a href="#sub">{n}</a>
                  </SubItem>
                ))}
              </SubNav>
            </Column>
          </Masthead>
          <Column as="main">
            <Article>
              <Title>東京で初雪　11月の観測は54年ぶり</Title>
              <Meta>
                <a href="#source">ウェザーマップ</a> 11/24(木) 6:26配信
              </Meta>
              <Share>
                <ShareButton $from="#05c0ff" $to="#00aef0" aria-label="Twitterで共有">
                  <FaTwitter size={21} />
                </ShareButton>
                <ShareButton $from="#2d6fc4" $to="#1d58a8" aria-label="Facebookで共有">
                  <Facebook />
                </ShareButton>
              </Share>
              <Body>
                <Photo>
                  <Frame>
                    <WeatherMap />
                  </Frame>
                  <figcaption>24日午前9時の雪や雨の予想。</figcaption>
                </Photo>
                <p>{lead}</p>
                <SubHead>今後の雪の予想</SubHead>
                <p>{forecast}</p>
              </Body>
            </Article>
          </Column>
        </Page>
        <ScrollTrack>
          <ScrollThumb />
        </ScrollTrack>
      </Viewport>
      <StatusTip>s.yimg.jp を読み込みました</StatusTip>
    </Screen>
  );
}
